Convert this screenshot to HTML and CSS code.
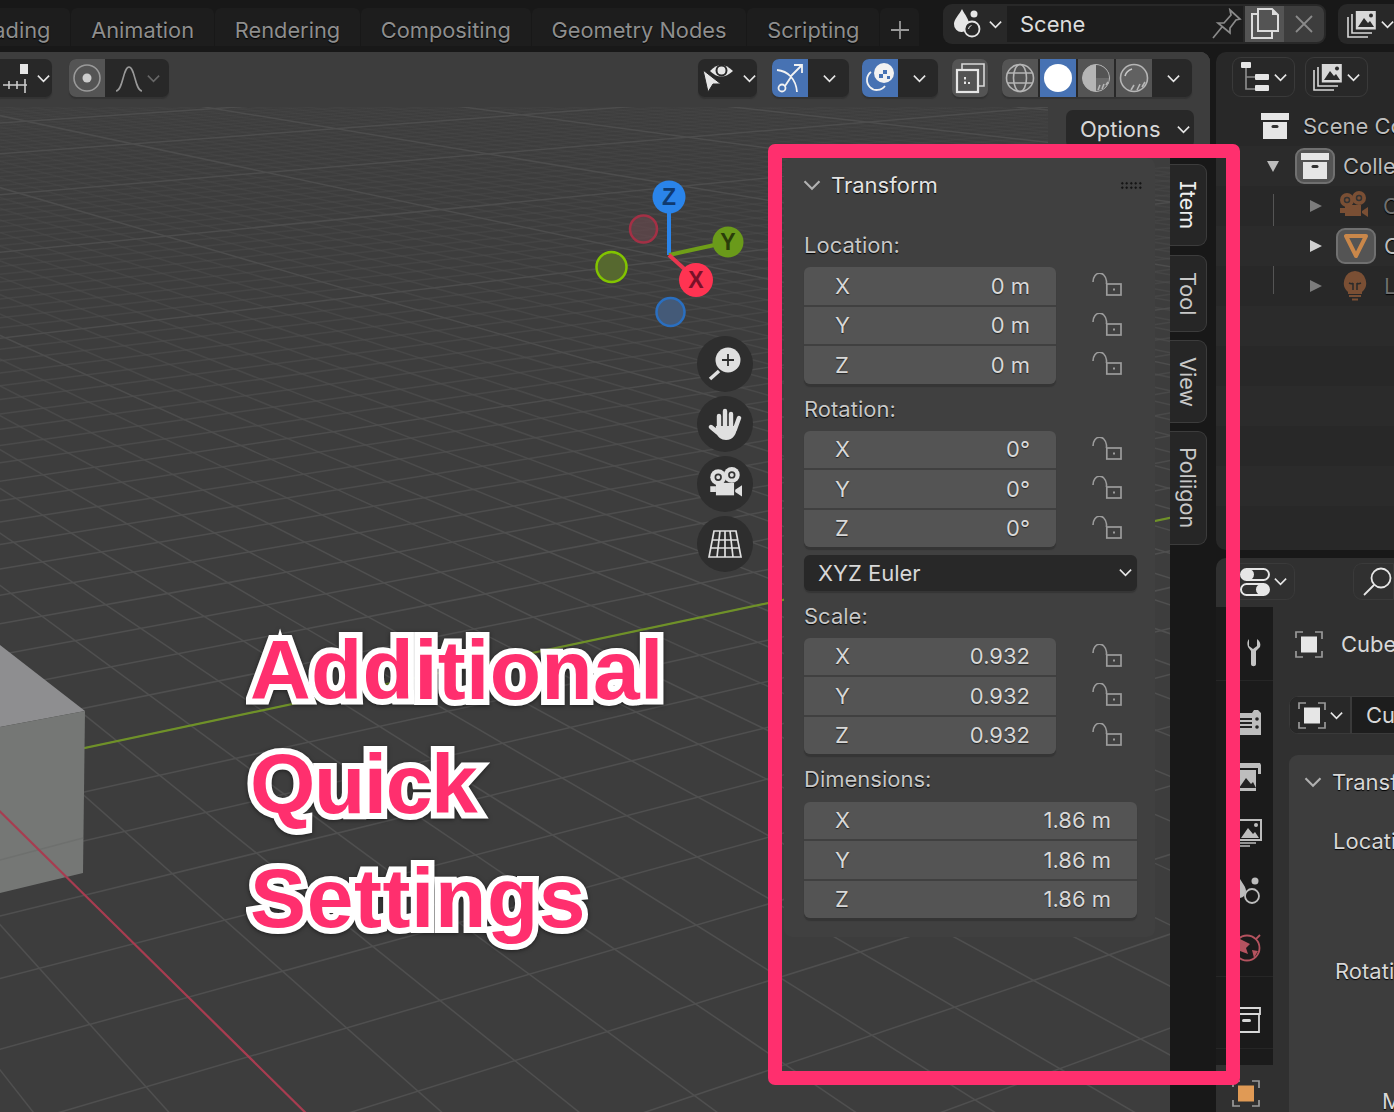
FILE: index.html
```html
<!DOCTYPE html>
<html lang="en">
<head>
    <meta charset="UTF-8">
    <title>Additional Quick Settings</title>
    <link rel="stylesheet" href="styles.css">
</head>
<body>
    <svg class="defs" width="0" height="0">
        <symbol id="chev" viewBox="0 0 16 16"><path d="M2 5l6 6 6-6" fill="none" stroke="currentColor" stroke-width="1.7"/></symbol>
        <symbol id="lock" viewBox="0 0 30 23"><path d="M1 9C1 -2 13 -3 14.5 8V11" fill="none" stroke="currentColor" stroke-width="1.6"/><rect x="14.8" y="11" width="14.2" height="11" fill="none" stroke="currentColor" stroke-width="1.7"/><rect x="21" y="15.5" width="2" height="2" fill="currentColor"/></symbol>
        <symbol id="box" viewBox="0 0 28 26"><path d="M0 0h28v7H0zM2 9h24v17H2z" fill="currentColor"/><rect x="10.5" y="12" width="7" height="3" rx="1.5" fill="#333"/></symbol>
        <symbol id="film" viewBox="0 0 30 30"><circle cx="9" cy="9" r="7" fill="currentColor"/><circle cx="21" cy="7" r="7" fill="currentColor"/><rect x="7" y="14" width="16" height="11" fill="currentColor"/><path d="M2 17h5v5H2zM24 20l6-4v10l-6-4z" fill="currentColor"/><circle cx="9" cy="9" r="2.5" fill="none" stroke="#333" stroke-width="1.5"/><circle cx="21" cy="7" r="2.5" fill="none" stroke="#333" stroke-width="1.5"/></symbol>
        <symbol id="bulb" viewBox="0 0 24 30"><path d="M12 0a12 12 0 0 1 7 21v2H5v-2A12 12 0 0 1 12 0z" fill="currentColor"/><path d="M6 12c2 1 3 1 4 0M14 12c1 1 2 1 4 0M10 12v7M14 12v7" fill="none" stroke="#2a2a2a" stroke-width="1.5"/><path d="M6 25h12M9 28.5h6" stroke="currentColor" stroke-width="2"/></symbol>
        <symbol id="obj" viewBox="0 0 28 27"><path d="M1 7V1h7M20 1h7v7M27 20v6h-7M8 26H1v-6" fill="none" stroke="#999" stroke-width="1.7"/><rect x="6" y="5.5" width="16" height="16" fill="currentColor"/></symbol>
        <symbol id="stack" viewBox="0 0 30 28"><path d="M1 7v20h20M5 4v19h20" fill="none" stroke="currentColor" stroke-width="1.6"/><rect x="8.8" y="1" width="20" height="18.5" fill="currentColor"/><path d="M11 17l6-9 4 5 2-2 4 6z" fill="#2a2a2a"/><circle cx="24" cy="5.5" r="2" fill="#2a2a2a"/></symbol>
    </svg>

    <header class="topbar">
        <nav class="tabs">
            <div class="tab first">Shading</div>
            <div class="tab">Animation</div>
            <div class="tab">Rendering</div>
            <div class="tab">Compositing</div>
            <div class="tab">Geometry Nodes</div>
            <div class="tab">Scripting</div>
            <div class="tab-add">
                <svg width="20" height="20" viewBox="0 0 20 20"><path d="M10 1v18M1 10h18" stroke="#9a9a9a" stroke-width="1.8"/></svg>
            </div>
        </nav>
        <div class="scene">
            <div class="scene-type">
                <svg width="32" height="32" viewBox="0 0 32 32"><path d="M9 1c3 6 7 10 7 15A7.5 7.5 0 0 1 9 24 7.5 7.5 0 0 1 1 16C1 11 6 7 9 1z" fill="#e6e6e6"/><circle cx="21" cy="6" r="3.5" fill="#e6e6e6"/><circle cx="19" cy="21" r="7.5" fill="#282828" stroke="#e6e6e6" stroke-width="1.8"/><path d="M15.5 21a4 4 0 0 1 3-3.5" stroke="#e6e6e6" fill="none"/></svg>
                <svg class="chev" width="15" height="15"><use href="#chev"/></svg>
            </div>
            <div class="scene-name">Scene
                <svg class="pin" width="30" height="32" viewBox="0 0 30 32"><path d="M18 2l10 9-4 1-6 8 0 5-12-10 6 0 7-8zM10 19L1 30" fill="none" stroke="#8a8a8a" stroke-width="1.7"/></svg>
            </div>
            <div class="scene-copy">
                <svg width="30" height="32" viewBox="0 0 30 32"><path d="M8 6H2v24h20v-7M8 1h14l6 6v16H8z" fill="none" stroke="#dcdcdc" stroke-width="2"/><path d="M22 1v6h6z" fill="#dcdcdc"/></svg>
            </div>
            <div class="scene-close">
                <svg width="18" height="18" viewBox="0 0 18 18"><path d="M1 1l16 16M17 1L1 17" stroke="#8a8a8a" stroke-width="1.8"/></svg>
            </div>
        </div>
        <div class="layer-btn">
            <svg width="30" height="28"><use href="#stack"/></svg>
            <svg class="chev" width="15" height="15"><use href="#chev"/></svg>
        </div>
    </header>

    <main class="main">
        <section class="viewport">
            <svg id="grid" class="grid" viewBox="0 52 1210 1060"></svg>

            <div class="vp-header">
                <div class="hbtn snap">
                    <svg width="26" height="30" viewBox="0 0 26 30"><rect x="17" y="1" width="8" height="10" fill="#e6e6e6"/><path d="M0 22h24M6 18v8M14 18v8M22 16v14" stroke="#ccc" stroke-width="1.6"/></svg>
                    <svg class="chev" width="15" height="15"><use href="#chev"/></svg>
                </div>
                <div class="hbtn prop">
                    <span class="seg grey">
                        <svg width="30" height="30" viewBox="0 0 30 30"><circle cx="15" cy="15" r="13" fill="none" stroke="#999" stroke-width="1.6"/><circle cx="15" cy="15" r="4.5" fill="#ccc"/></svg>
                    </span>
                    <span class="seg wide">
                        <svg width="30" height="30" viewBox="0 0 30 30"><path d="M2 28c7 0 7-24 13-24s6 24 13 24" fill="none" stroke="#999" stroke-width="1.6"/></svg>
                        <svg class="chev dim" width="15" height="15"><use href="#chev"/></svg>
                    </span>
                </div>
                <div class="hbtn eye">
                    <svg width="34" height="32" viewBox="0 0 34 32"><path d="M9 9Q20 -3 32 9 20 20 9 9z" fill="#e6e6e6"/><circle cx="20.5" cy="8.5" r="5" fill="#e6e6e6" stroke="#282828" stroke-width="2"/><path d="M2 8l18 14h-8l-5 8z" fill="#e6e6e6" stroke="#282828" stroke-width="1"/></svg>
                    <svg class="chev" width="15" height="15"><use href="#chev"/></svg>
                </div>
                <div class="hbtn gizmo-btn">
                    <span class="seg blue">
                        <svg width="32" height="32" viewBox="0 0 32 32"><path d="M3 8c11 1 19 9 20 22M17 14L28 3M20 3h8v8" fill="none" stroke="#f2f2f2" stroke-width="1.8"/><circle cx="8" cy="26" r="3.5" fill="none" stroke="#f2f2f2" stroke-width="1.8"/><path d="M11 24l6-9" stroke="#f2f2f2" stroke-width="1.8"/></svg>
                    </span>
                    <span class="seg chev-seg"><svg class="chev" width="15" height="15"><use href="#chev"/></svg></span>
                </div>
                <div class="hbtn overlay-btn">
                    <span class="seg blue">
                        <svg width="32" height="32" viewBox="0 0 32 32"><path d="M7 10a10 10 0 1 0 14 14" fill="none" stroke="#f2f2f2" stroke-width="1.8"/><circle cx="20" cy="11" r="10" fill="#f2f2f2"/><path d="M15 12h4v4h-4zM19 8h4v4h-4zM23 14h3v3h-3z" fill="#4772b3"/></svg>
                    </span>
                    <span class="seg chev-seg"><svg class="chev" width="15" height="15"><use href="#chev"/></svg></span>
                </div>
                <div class="hbtn xray">
                    <svg width="32" height="32" viewBox="0 0 32 32"><path d="M8 8V2h22v22h-6" fill="none" stroke="#d8d8d8" stroke-width="1.6"/><rect x="3" y="8" width="21" height="22" fill="none" stroke="#e6e6e6" stroke-width="2.2"/><path d="M11 15v6h5" fill="none" stroke="#e6e6e6" stroke-width="2" stroke-dasharray="2.5 2"/></svg>
                </div>
                <div class="hbtn shading">
                    <span class="seg grey">
                        <svg width="30" height="30" viewBox="0 0 30 30"><circle cx="15" cy="15" r="13.5" fill="none" stroke="#b5b5b5" stroke-width="1.6"/><ellipse cx="15" cy="15" rx="6.5" ry="13.5" fill="none" stroke="#b5b5b5" stroke-width="1.6"/><path d="M2 10h26M2 20h26" stroke="#b5b5b5" stroke-width="1.6"/></svg>
                    </span>
                    <span class="seg blue">
                        <svg width="30" height="30" viewBox="0 0 30 30"><circle cx="15" cy="15" r="14" fill="#fff"/></svg>
                    </span>
                    <span class="seg grey">
                        <svg width="30" height="30" viewBox="0 0 30 30"><circle cx="15" cy="15" r="13.5" fill="#b5b5b5" stroke="#b5b5b5"/><path d="M15 2a13 13 0 0 1 13 13H15z" fill="#545454"/><path d="M15 15h13a13 13 0 0 1-13 13z" fill="#6a6a6a"/><path d="M17 27l2-5M21 26l2-5M25 22l2-3" stroke="#b5b5b5" stroke-width="1.6"/></svg>
                    </span>
                    <span class="seg grey">
                        <svg width="30" height="30" viewBox="0 0 30 30"><circle cx="15" cy="15" r="13.5" fill="#616161" stroke="#b5b5b5" stroke-width="1.6"/><path d="M6 13c1-4 4-6 7-7" fill="none" stroke="#c8c8c8" stroke-width="1.6"/><path d="M12 27l3-5M18 27l3-6M23 24l3-5" stroke="#b5b5b5" stroke-width="1.6"/></svg>
                    </span>
                    <span class="seg chev-seg"><svg class="chev" width="15" height="15"><use href="#chev"/></svg></span>
                </div>
            </div>

            <div class="options-strip">
                <div class="options">Options <svg class="chev" width="15" height="15"><use href="#chev"/></svg></div>
            </div>

            <svg class="axis-gizmo" width="170" height="170" viewBox="590 175 170 170">
                <path d="M669 255V205" stroke="#2a84ea" stroke-width="4"/>
                <path d="M669 255l50-11" stroke="#6f9e18" stroke-width="4"/>
                <path d="M669 255l22 20" stroke="#e8364f" stroke-width="4"/>
                <circle cx="643.5" cy="229" r="13.5" fill="#6b4a4f" fill-opacity=".6" stroke="#a33045" stroke-width="2.5"/>
                <circle cx="611.5" cy="267" r="15" fill="#56682f" stroke="#82c400" stroke-width="2.5"/>
                <circle cx="670.5" cy="312" r="14" fill="#445a78" stroke="#2a6fc0" stroke-width="2.5"/>
                <circle cx="669" cy="197" r="16.5" fill="#2a84ea"/>
                <circle cx="728" cy="242" r="15.5" fill="#6a9a1a"/>
                <circle cx="696" cy="280" r="17" fill="#ff3352"/>
                <text x="669" y="205" class="axis-txt z">Z</text>
                <text x="728" y="250" class="axis-txt y">Y</text>
                <text x="696" y="288" class="axis-txt x">X</text>
            </svg>

            <div class="nav-gizmo">
                <div class="nav-btn">
                    <svg width="34" height="34" viewBox="0 0 34 34"><circle cx="20" cy="13" r="12.5" fill="#e0e0e0"/><path d="M20 7v12M14 13h12" stroke="#2d2d2d" stroke-width="1.8"/><path d="M2 32l9-8" stroke="#e0e0e0" stroke-width="3.5"/></svg>
                </div>
                <div class="nav-btn">
                    <svg width="34" height="34" viewBox="0 0 34 34"><path d="M11 21V9M17 21V4M23 21V7M27 22l4-11M9 25L3 20" fill="none" stroke="#e0e0e0" stroke-width="4.4" stroke-linecap="round"/><path d="M8 19h21c0 8-4 14-11 14-5 0-8-3-11-8z" fill="#e0e0e0"/></svg>
                </div>
                <div class="nav-btn">
                    <svg width="34" height="34" viewBox="0 0 30 30"><use href="#film" style="color:#e0e0e0"/></svg>
                </div>
                <div class="nav-btn">
                    <svg width="34" height="30" viewBox="0 0 34 30"><path d="M6 2h22l5 26H1zM12 2L9 28M22 2l3 26M17 2v26M4 11h26M2.5 19h29" fill="none" stroke="#e0e0e0" stroke-width="1.7"/></svg>
                </div>
            </div>

            <aside class="sidebar">
                <div class="sidebar-main">
                    <div class="panel">
                        <div class="panel-head">
                            <svg class="panel-chev" width="20" height="20"><use href="#chev"/></svg>
                            <span>Transform</span>
                            <i class="grip"></i>
                        </div>

                        <div class="prop-label first-label">Location:</div>
                        <div class="vec-row">
                            <div class="vec">
                                <div class="num"><span>X</span><span>0 m</span></div>
                                <div class="num"><span>Y</span><span>0 m</span></div>
                                <div class="num"><span>Z</span><span>0 m</span></div>
                            </div>
                            <div class="locks">
                                <svg width="30" height="23"><use href="#lock"/></svg>
                                <svg width="30" height="23"><use href="#lock"/></svg>
                                <svg width="30" height="23"><use href="#lock"/></svg>
                            </div>
                        </div>

                        <div class="prop-label">Rotation:</div>
                        <div class="vec-row">
                            <div class="vec">
                                <div class="num"><span>X</span><span>0°</span></div>
                                <div class="num"><span>Y</span><span>0°</span></div>
                                <div class="num"><span>Z</span><span>0°</span></div>
                            </div>
                            <div class="locks">
                                <svg width="30" height="23"><use href="#lock"/></svg>
                                <svg width="30" height="23"><use href="#lock"/></svg>
                                <svg width="30" height="23"><use href="#lock"/></svg>
                            </div>
                        </div>
                        <div class="select">XYZ Euler <svg class="chev" width="15" height="15"><use href="#chev"/></svg></div>

                        <div class="prop-label">Scale:</div>
                        <div class="vec-row">
                            <div class="vec">
                                <div class="num"><span>X</span><span>0.932</span></div>
                                <div class="num"><span>Y</span><span>0.932</span></div>
                                <div class="num"><span>Z</span><span>0.932</span></div>
                            </div>
                            <div class="locks">
                                <svg width="30" height="23"><use href="#lock"/></svg>
                                <svg width="30" height="23"><use href="#lock"/></svg>
                                <svg width="30" height="23"><use href="#lock"/></svg>
                            </div>
                        </div>

                        <div class="prop-label">Dimensions:</div>
                        <div class="vec full">
                            <div class="num"><span>X</span><span>1.86 m</span></div>
                            <div class="num"><span>Y</span><span>1.86 m</span></div>
                            <div class="num"><span>Z</span><span>1.86 m</span></div>
                        </div>
                    </div>
                </div>
                <div class="side-tabs">
                    <div class="side-tab active item">Item</div>
                    <div class="side-tab tool">Tool</div>
                    <div class="side-tab view">View</div>
                    <div class="side-tab poliigon">Poliigon</div>
                </div>
            </aside>

            <div class="callout">
                <span class="line-a">Additional</span>
                <span class="line-q">Quick</span>
                <span class="line-s">Settings</span>
            </div>
        </section>

        <section class="right">
            <div class="outliner">
                <div class="out-head">
                    <div class="ohbtn">
                        <svg width="30" height="30" viewBox="0 0 30 30"><rect x="1" y="0" width="10" height="6" rx="1" fill="#e6e6e6"/><path d="M6 6v21h9M6 15h9" fill="none" stroke="#8a8a8a" stroke-width="1.7"/><rect x="15" y="12" width="14" height="6" rx="1" fill="#e6e6e6"/><rect x="15" y="23" width="14" height="6" rx="1" fill="#e6e6e6"/></svg>
                        <svg class="chev" width="15" height="15"><use href="#chev"/></svg>
                    </div>
                    <div class="ohbtn second">
                        <svg width="30" height="28"><use href="#stack"/></svg>
                        <svg class="chev" width="15" height="15"><use href="#chev"/></svg>
                    </div>
                </div>
                <div class="out-row lvl0">
                    <svg width="28" height="26" class="c-white"><use href="#box"/></svg>
                    <span class="name">Scene Collection</span>
                </div>
                <div class="out-row alt lvl1">
                    <i class="tri down"></i>
                    <span class="hl"><svg width="28" height="26" class="c-white"><use href="#box"/></svg></span>
                    <span class="name">Collection</span>
                </div>
                <div class="tree">
                    <div class="out-row lvl2">
                        <i class="tri right dim"></i>
                        <svg width="30" height="30" class="c-brown ico"><use href="#film"/></svg>
                        <span class="name faded">Camera</span>
                    </div>
                    <div class="out-row alt lvl2">
                        <i class="tri right"></i>
                        <span class="hl">
                            <svg width="26" height="26" viewBox="0 0 26 26"><path d="M3 3h20L13 23z" fill="none" stroke="#c9874a" stroke-width="4" stroke-linejoin="round"/></svg>
                        </span>
                        <span class="name">Cube</span>
                    </div>
                    <div class="out-row lvl2">
                        <i class="tri right dim"></i>
                        <svg width="24" height="30" class="c-brown ico bulb"><use href="#bulb"/></svg>
                        <span class="name faded">Light</span>
                    </div>
                </div>
                <div class="out-row alt"></div>
                <div class="out-row"></div>
                <div class="out-row alt"></div>
                <div class="out-row"></div>
                <div class="out-row alt"></div>
            </div>

            <div class="props">
                <div class="props-head">
                    <div class="ohbtn editor">
                        <svg width="30" height="30" viewBox="0 0 30 30"><rect x="1" y="2" width="28" height="11" rx="5.5" fill="none" stroke="#e6e6e6" stroke-width="2"/><rect x="1" y="2" width="13" height="11" rx="5.5" fill="#e6e6e6"/><rect x="1" y="17" width="28" height="11" rx="5.5" fill="none" stroke="#e6e6e6" stroke-width="2"/><rect x="16" y="17" width="13" height="11" rx="5.5" fill="#e6e6e6"/></svg>
                        <svg class="chev" width="15" height="15"><use href="#chev"/></svg>
                    </div>
                    <div class="search">
                        <svg width="30" height="30" viewBox="0 0 30 30"><circle cx="19" cy="11" r="9.5" fill="none" stroke="#e6e6e6" stroke-width="1.8"/><path d="M12 18L2 28" stroke="#e6e6e6" stroke-width="1.8"/></svg>
                    </div>
                </div>
                <div class="props-body">
                    <div class="prop-tabs">
                        <div class="ptab-group g-tool">
                            <svg width="30" height="30" viewBox="0 0 30 30"><path d="M17 2v7l4 3 4-3V2c3 2 4 5 3 8l-4 4v13c0 3-5 3-5 0V14l-3-4c-1-3-1-6 1-8z" fill="#c4c4c4"/><path d="M2 16h5v10H2z" fill="#c4c4c4"/></svg>
                        </div>
                        <div class="ptab-group g-data">
                            <svg width="30" height="26" viewBox="0 0 30 26"><path d="M2 4h18l2-3h4l3 3v22H2z" fill="#bdbdbd"/><path d="M8 10h12M8 14h12M8 18h12" stroke="#222" stroke-width="1.8"/><circle cx="25" cy="10" r="1.8" fill="#222"/><circle cx="25" cy="18" r="1.8" fill="#222"/></svg>
                            <svg width="30" height="28" viewBox="0 0 30 28"><path d="M4 0h24l1 2v9h-3V5H4z" fill="#bdbdbd"/><path d="M4 7h20v21H4z" fill="#bdbdbd"/><path d="M7 25l7-10 5 6 2-2 3 6z" fill="#222"/></svg>
                            <svg width="30" height="28" viewBox="0 0 30 28"><rect x="6" y="1" width="23" height="20" fill="none" stroke="#bdbdbd" stroke-width="2"/><path d="M9 19l7-10 5 6 2-2 4 6z" fill="#bdbdbd"/><circle cx="24" cy="6" r="2" fill="#bdbdbd"/><path d="M2 24h22M2 27h16" stroke="#bdbdbd" stroke-width="1.7"/></svg>
                            <svg width="30" height="30" viewBox="0 0 30 30"><path d="M8 4c3 5 6 8 6 12a7 7 0 0 1-6 7C3 23 1 20 1 16c0-4 4-8 7-12z" fill="#bdbdbd"/><circle cx="23" cy="6" r="3.5" fill="#bdbdbd"/><circle cx="20" cy="21" r="7" fill="#1b1b1b" stroke="#bdbdbd" stroke-width="1.8"/></svg>
                            <svg width="30" height="30" viewBox="0 0 30 30"><circle cx="15" cy="15" r="12.5" fill="none" stroke="#b5535f" stroke-width="1.8"/><path d="M8 6l10 5-4 4 2 6-8-3-4-5zM20 17l6 1-4 7z" fill="#b5535f"/><path d="M24 6l4-4" stroke="#b5535f" stroke-width="1.8"/></svg>
                        </div>
                        <div class="ptab-group g-coll">
                            <svg width="30" height="26" viewBox="0 0 30 26"><path d="M1 1h27v6H1zM3 7v18h24V7" fill="none" stroke="#d8d8d8" stroke-width="1.8"/><rect x="10" y="12" width="9" height="3" rx="1.5" fill="#d8d8d8"/></svg>
                        </div>
                        <div class="ptab-bottom">
                            <svg width="28" height="27" class="c-orange"><use href="#obj"/></svg>
                        </div>
                    </div>
                    <div class="prop-content">
                        <div class="obj-row">
                            <svg width="28" height="27" class="c-white"><use href="#obj"/></svg>
                            <span>Cube</span>
                        </div>
                        <div class="obj-field">
                            <span class="obj-type">
                                <svg width="28" height="27" class="c-white"><use href="#obj"/></svg>
                                <svg class="chev" width="15" height="15"><use href="#chev"/></svg>
                            </span>
                            <span class="obj-name">Cube</span>
                        </div>
                        <div class="trans-panel">
                            <div class="trans-head">
                                <svg class="panel-chev" width="20" height="20"><use href="#chev"/></svg>
                                <span>Transform</span>
                            </div>
                            <div class="trans-label loc">Location X</div>
                            <div class="trans-label rot">Rotation X</div>
                            <div class="trans-label mode">Mode</div>
                        </div>
                    </div>
                </div>
            </div>
        </section>
    </main>

    <div class="frame"></div>

    <script src="grid.js"></script>
</body>
</html>
```

FILE: styles.css
```css
* {
    box-sizing: border-box;
    margin: 0;
    padding: 0;
}

html, body {
    width: 1394px;
    height: 1112px;
    overflow: hidden;
}

body {
    position: relative;
    background-color: #181818;
    color: #d8d8d8;
    font-family: Inter, "Liberation Sans", sans-serif;
    font-size: 22px;
    font-feature-settings: "cv08";
}

.defs {
    position: absolute;
}

.chev {
    color: #e6e6e6;
    flex: none;
}

.chev.dim {
    color: #666;
}

/* top bar */
.topbar {
    display: flex;
    align-items: flex-start;
    height: 52px;
    overflow: hidden;
}

.tabs {
    display: flex;
    flex: 0 0 930px;
    height: 38px;
    margin-top: 8px;
    overflow: hidden;
}

.tab {
    flex: none;
    height: 38px;
    margin-right: 0.7px;
    padding: 0 20px;
    background-color: #1d1d1d;
    border-radius: 6px 6px 0 0;
    color: #8e8e8e;
    font-size: 21.8px;
    line-height: 44px;
    text-shadow: 0 1px 1px #000;
}

.tab.first {
    margin-left: -53.5px;
}

.tab-add {
    display: flex;
    flex: none;
    align-items: center;
    justify-content: center;
    width: 39px;
    height: 38px;
    padding-top: 6px;
    background-color: #1d1d1d;
    border-radius: 6px 6px 0 0;
}

.scene {
    display: flex;
    flex: none;
    width: 383px;
    height: 40px;
    margin: 4px 0 0 13px;
    padding: 2px;
    background-color: #282828;
    border-radius: 9px;
}

.scene-type {
    display: flex;
    align-items: center;
    gap: 3px;
    width: 62px;
    padding-left: 8px;
}

.scene-name {
    display: flex;
    align-items: center;
    justify-content: space-between;
    width: 236px;
    margin-right: 2px;
    padding: 0 1px 0 13px;
    background-color: #1d1d1d;
    color: #dcdcdc;
}

.scene-copy {
    display: flex;
    align-items: center;
    justify-content: center;
    width: 39px;
    background-color: #545454;
}

.scene-close {
    display: flex;
    align-items: center;
    justify-content: center;
    width: 40px;
    background-color: #3d3d3d;
    border-radius: 0 7px 7px 0;
}

.layer-btn {
    display: flex;
    flex: none;
    align-items: center;
    gap: 3px;
    width: 70px;
    height: 40px;
    margin: 4px 0 0 12px;
    padding-left: 9px;
    background-color: #282828;
    border-radius: 9px;
}

/* main layout */
.main {
    display: flex;
    height: 1060px;
}

.viewport {
    position: relative;
    display: flex;
    flex: 0 0 1210px;
    flex-direction: column;
    overflow: hidden;
    background-color: #3d3d3d;
    border-radius: 0 10px 0 0;
}

.grid {
    position: absolute;
    top: 0;
    left: 0;
    width: 1210px;
    height: 1060px;
}

.vp-header {
    position: relative;
    display: flex;
    flex: none;
    align-items: flex-start;
    height: 55px;
    padding-top: 7px;
    background-color: #3d3d3d;
}

.hbtn {
    display: flex;
    flex: none;
    align-items: center;
    height: 38px;
    overflow: hidden;
    background-color: #282828;
    border-radius: 7px;
    box-shadow: 0 2px 1px #333;
}

.seg {
    display: flex;
    flex: none;
    align-items: center;
    justify-content: center;
    width: 36px;
    height: 38px;
}

.seg.grey, .seg.blue {
    margin-right: 2px;
    background-color: #545454;
}

.seg.blue {
    background-color: #4772b3;
}

.seg.wide {
    justify-content: flex-start;
    gap: 2px;
    width: 62px;
    padding-left: 7px;
}

.seg.chev-seg {
    flex: 1;
}

.snap {
    gap: 7px;
    justify-content: flex-end;
    width: 52px;
    padding-right: 1px;
    border-radius: 0 7px 7px 0;
}

.prop {
    width: 100px;
    margin-left: 17px;
}

.eye {
    gap: 7px;
    width: 59px;
    margin-left: 529px;
    padding-left: 3px;
}

.gizmo-btn {
    width: 77px;
    margin-left: 15px;
}

.overlay-btn {
    width: 76px;
    margin-left: 13px;
}

.xray {
    justify-content: center;
    width: 36px;
    margin-left: 14px;
    background-color: #545454;
}

.shading {
    width: 190px;
    margin-left: 14px;
}

.options-strip {
    position: relative;
    display: flex;
    flex: none;
    justify-content: flex-end;
    width: 162px;
    height: 60px;
    margin-left: auto;
    padding: 3px 16px 0 0;
    background-color: #3d3d3d;
}

.options {
    display: flex;
    align-items: center;
    justify-content: space-between;
    width: 128px;
    height: 38px;
    padding: 0 3px 0 14px;
    background-color: #282828;
    border-radius: 7px;
    color: #d8d8d8;
}

.axis-gizmo {
    position: absolute;
    top: 123px;
    left: 590px;
}

.axis-txt {
    font-family: "Liberation Sans", sans-serif;
    font-size: 23px;
    font-weight: 700;
    text-anchor: middle;
}

.axis-txt.z {
    fill: #0f3a70;
}

.axis-txt.y {
    fill: #2a3d0a;
}

.axis-txt.x {
    fill: #7a1028;
}

.nav-gizmo {
    position: absolute;
    top: 284px;
    left: 697px;
    display: flex;
    flex-direction: column;
    gap: 4px;
}

.nav-btn {
    display: flex;
    align-items: center;
    justify-content: center;
    width: 56px;
    height: 56px;
    background-color: #2e2e2e;
    border-radius: 50%;
}

/* sidebar in the viewport */
.sidebar {
    position: absolute;
    top: 106px;
    left: 782px;
    display: flex;
    width: 428px;
    height: 954px;
}

.sidebar-main {
    width: 388px;
    padding-left: 2px;
}

.panel {
    width: 371px;
    height: 779px;
    padding: 0 18px 0 20px;
    background-color: #404040;
    border-radius: 8px;
}

.panel-head {
    position: relative;
    display: flex;
    align-items: center;
    height: 54px;
    color: #e4e4e4;
    text-shadow: 0 1px 1px #000;
}

.panel-chev {
    flex: none;
    margin: 0 9px 0 -2px;
    color: #b0b0b0;
}

.grip {
    position: absolute;
    top: 23px;
    right: -5px;
    width: 22px;
    height: 9px;
    background-image: radial-gradient(#111 1px, transparent 1.3px);
    background-size: 4.5px 4.5px;
}

.prop-label {
    height: 38px;
    margin-top: 6px;
    color: #c8c8c8;
    line-height: 38.5px;
    text-shadow: 0 1px 1px #000;
}

.first-label {
    margin-top: 14px;
}

.vec-row {
    display: flex;
    margin-top: 3px;
}

.vec {
    display: flex;
    flex-direction: column;
    gap: 2px;
    width: 252px;
    border-radius: 6px;
    box-shadow: 0 3px 1px #353535;
}

.vec.full {
    width: 333px;
    margin-top: 3.5px;
}

.num {
    display: flex;
    align-items: center;
    justify-content: space-between;
    height: 37.5px;
    padding: 0 26px 0 31px;
    background-color: #545454;
    color: #d8d8d8;
    text-shadow: 0 1px 1px #222;
}

.num:first-child {
    border-radius: 6px 6px 0 0;
}

.num:last-child {
    border-radius: 0 0 6px 6px;
}

.locks {
    display: flex;
    flex-direction: column;
    gap: 16.5px;
    padding: 6px 0 0 36px;
    color: #9c9c9c;
}

.select {
    display: flex;
    align-items: center;
    justify-content: space-between;
    width: 333px;
    height: 36px;
    margin: 7.5px 0 3px;
    padding: 0 4px 0 14px;
    background-color: #282828;
    border-radius: 6px;
    box-shadow: 0 2px 1px #353535;
}

.side-tabs {
    display: flex;
    flex-direction: column;
    width: 40px;
    padding-top: 6px;
    background-color: #181818;
}

.side-tab {
    display: flex;
    align-items: center;
    justify-content: center;
    width: 37px;
    background-color: #262626;
    border: 1px solid #3c3c3c;
    border-left: none;
    border-radius: 0 9px 9px 0;
    color: #c8c8c8;
    font-size: 21.6px;
    writing-mode: vertical-rl;
}

.side-tab.active {
    color: #eee;
}

.side-tab.item {
    height: 82px;
    margin-bottom: 9px;
}

.side-tab.tool {
    height: 77px;
    margin-bottom: 8px;
}

.side-tab.view {
    height: 83px;
    margin-bottom: 8px;
}

.side-tab.poliigon {
    height: 114px;
}

/* annotation over the screenshot */
.callout {
    position: absolute;
    top: 561px;
    left: 250px;
    color: #ff2f6e;
    font-family: "Liberation Sans", sans-serif;
    font-size: 84px;
    font-weight: 700;
    line-height: 114px;
    paint-order: stroke fill;
    -webkit-text-stroke: 12px #fff;
    filter: drop-shadow(0 1px 2px rgba(0, 0, 0, 0.5));
}

.callout span {
    display: block;
}

.line-a {
    letter-spacing: 0.3px;
}

.line-q {
    letter-spacing: -1.4px;
}

.line-s {
    letter-spacing: 0.6px;
}

.frame {
    position: absolute;
    top: 144px;
    left: 768px;
    width: 472px;
    height: 941px;
    border: 14px solid #ff2f6e;
    border-radius: 7px;
}

/* outliner and properties */
.right {
    display: flex;
    flex: 0 0 178px;
    flex-direction: column;
    gap: 8px;
    margin-left: 6px;
    overflow: hidden;
}

.outliner {
    height: 498px;
    overflow: hidden;
    background-color: #282828;
    border-radius: 10px 0 0 10px;
}

.out-head {
    display: flex;
    gap: 10px;
    height: 54px;
    padding: 5px 0 0 16px;
}

.ohbtn {
    display: flex;
    flex: none;
    align-items: center;
    gap: 3px;
    width: 63px;
    height: 40px;
    padding-left: 7px;
    border: 1px solid #3a3a3a;
    border-radius: 9px;
}

.out-row {
    display: flex;
    align-items: center;
    height: 40px;
    padding-left: 45px;
    white-space: nowrap;
    color: #bdbdbd;
    text-shadow: 0 1px 1px #000;
}

.out-row > * {
    flex: none;
}

.out-row.alt {
    background-color: #2b2b2b;
}

.lvl0 .name {
    margin-left: 14px;
}

.out-row.lvl1 {
    padding-left: 51px;
}

.lvl1 .hl {
    margin-left: 16px;
}

.lvl1 .name {
    margin-left: 8px;
}

.out-row.lvl2 {
    padding-left: 88px;
}

.lvl2 .ico {
    margin-left: 16px;
}

.lvl2 .bulb {
    margin-left: 21px;
}

.lvl2 .hl {
    margin-left: 14px;
}

.lvl2 .name {
    margin-left: 15px;
}

.lvl2 .hl + .name {
    margin-left: 8px;
}

.lvl2 .bulb + .name {
    margin-left: 17px;
}

.tree {
    background-image: linear-gradient(#555, #555);
    background-repeat: no-repeat;
    background-position: 57px 8px;
    background-size: 1px 100px;
}

.hl {
    display: flex;
    align-items: center;
    justify-content: center;
    width: 40px;
    height: 36px;
    background-color: #545454;
    border: 2px solid #707070;
    border-radius: 9px;
}

.tri {
    width: 0;
    height: 0;
}

.tri.down {
    border-top: 11px solid #bcbcbc;
    border-right: 6px solid transparent;
    border-left: 6px solid transparent;
}

.tri.right {
    border-top: 6px solid transparent;
    border-bottom: 6px solid transparent;
    border-left: 12px solid #d0d0d0;
}

.tri.dim {
    border-left-color: #7c7c7c;
}

.faded {
    color: #707070;
}

.c-white {
    color: #e6e6e6;
}

.c-brown {
    color: #7a4f34;
}

.c-orange {
    color: #e09a55;
}

.props {
    flex: 1;
    overflow: hidden;
    background-color: #303030;
    border-radius: 10px 0 0 0;
}

.props-head {
    display: flex;
    height: 49px;
    padding-top: 5px;
    padding-left: 16px;
}

.ohbtn.editor {
    height: 37px;
}

.search {
    display: flex;
    align-items: center;
    width: 60px;
    height: 37px;
    margin-left: 58px;
    padding-left: 8px;
    border: 1px solid #3a3a3a;
    border-radius: 9px 0 0 9px;
}

.props-body {
    display: flex;
}

.prop-tabs {
    display: flex;
    flex: 0 0 57px;
    flex-direction: column;
}

.ptab-group {
    display: flex;
    flex: none;
    flex-direction: column;
    align-items: flex-end;
    padding-right: 11px;
    background-color: #1b1b1b;
    border-bottom: 1px solid #262626;
}

.g-tool {
    height: 74px;
    padding-top: 30px;
}

.g-data {
    gap: 28px;
    height: 296px;
    padding-top: 28px;
}

.g-coll {
    height: 72px;
    padding-top: 30px;
}

.ptab-bottom {
    display: flex;
    flex: none;
    justify-content: flex-end;
    padding: 15px 13px 0 0;
    border-top: 16px solid #1b1b1b;
}

.prop-content {
    flex: 1;
    padding-left: 16px;
    white-space: nowrap;
}

.obj-row {
    display: flex;
    align-items: center;
    gap: 18px;
    height: 74px;
    padding-left: 6px;
    color: #d8d8d8;
}

.obj-field {
    display: flex;
    width: 120px;
    height: 38px;
    margin-top: 15px;
    overflow: hidden;
    background-color: #1d1d1d;
    border: 1px solid #3a3a3a;
    border-radius: 9px 0 0 9px;
}

.obj-type {
    display: flex;
    flex: none;
    align-items: center;
    gap: 3px;
    width: 62px;
    padding-left: 8px;
    background-color: #282828;
    border-right: 2px solid #3a3a3a;
}

.obj-name {
    padding-left: 14px;
    line-height: 36px;
}

.trans-panel {
    height: 400px;
    margin-top: 21px;
    padding-left: 16px;
    background-color: #3d3d3d;
    border-radius: 9px 0 0 0;
    text-shadow: 0 1px 1px #000;
}

.trans-head {
    display: flex;
    align-items: center;
    height: 54px;
}

.trans-label.loc {
    margin-top: 19px;
    padding-left: 28px;
}

.trans-label.rot {
    margin-top: 104px;
    padding-left: 30px;
}

.trans-label.mode {
    margin-top: 104px;
    padding-left: 77px;
}
```

FILE: grid.js
```js
// perspective floor grid of the 3d viewport
var svg = document.getElementById("grid");
var NS = "http://www.w3.org/2000/svg";

var O = [-38, 774];       // world origin on screen
var VA = [4450, -178];    // vanishing point along the green axis
var VB = [-900, -76];     // vanishing point along the red axis
var a = 0.0179;           // one grid unit along green
var b = 0.0416;           // one grid unit along red

function project(u, v) {
    var w = 1 + u * a + v * b;
    return [
        (O[0] + u * a * VA[0] + v * b * VB[0]) / w,
        (O[1] + u * a * VA[1] + v * b * VB[1]) / w
    ];
}

function line(p, q, color, width) {
    var l = document.createElementNS(NS, "line");
    l.setAttribute("x1", p[0]);
    l.setAttribute("y1", p[1]);
    l.setAttribute("x2", q[0]);
    l.setAttribute("y2", q[1]);
    l.setAttribute("stroke", color);
    l.setAttribute("stroke-width", width);
    svg.appendChild(l);
}

function poly(points, fill) {
    var p = document.createElementNS(NS, "polygon");
    p.setAttribute("points", points);
    p.setAttribute("fill", fill);
    svg.appendChild(p);
}

// thin lines fade out towards the far end of the floor
svg.innerHTML =
    '<defs><linearGradient id="fade" gradientUnits="userSpaceOnUse" x1="0" y1="107" x2="0" y2="560">' +
    '<stop offset="0" stop-color="#4a4a4a" stop-opacity=".25"/>' +
    '<stop offset="1" stop-color="#4f4f4f"/>' +
    '</linearGradient></defs>' +
    '<rect x="0" y="52" width="1210" height="1060" fill="#3d3d3d"/>';

var far = 400;
for (var i = -40; i <= 200; i++) {
    var minU = Math.max(-far, (0.06 - 1 - i * b) / a);
    var minV = Math.max(-far, (0.06 - 1 - i * a) / b);
    var major = i % 10 == 0;
    var color = major ? "#4d4d4d" : "url(#fade)";
    line(project(minU, i), project(far, i), color, 1.5);
    line(project(i, minV), project(i, far), color, 1.5);
}

line(project(0, 0), project(far, 0), "#6f9128", 2.2);

// the default cube, cut by the left edge
poly("0,645 85,711 0,727", "#8e8e90");
poly("0,727 85,711 83,873 0,893", "#757775");
line([0, 860], [83, 838], "#6e706e", 1.5);

line(project(0, 0), project(0, (0.06 - 1) / b), "#a83c50", 2.2);
```
